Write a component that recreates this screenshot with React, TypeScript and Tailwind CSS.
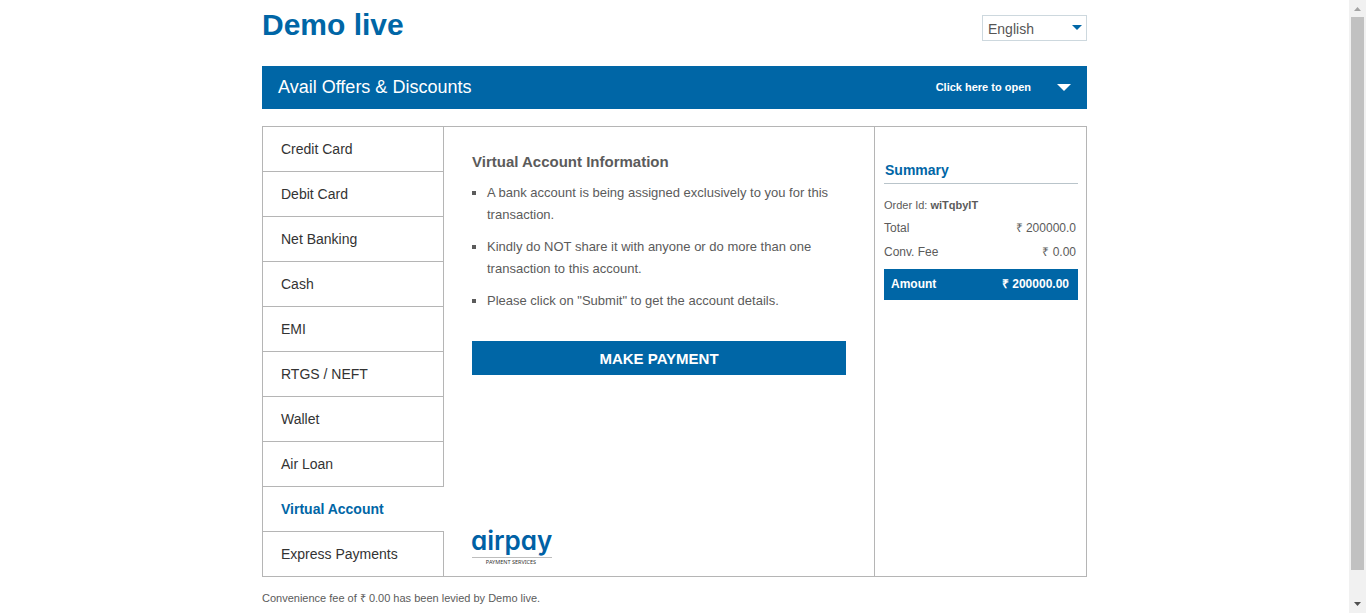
import { useState } from "react";

const methods = [
  "Credit Card",
  "Debit Card",
  "Net Banking",
  "Cash",
  "EMI",
  "RTGS / NEFT",
  "Wallet",
  "Air Loan",
  "Virtual Account",
  "Express Payments",
];

const notes = [
  "A bank account is being assigned exclusively to you for this transaction.",
  "Kindly do NOT share it with anyone or do more than one transaction to this account.",
  'Please click on "Submit" to get the account details.',
];

function Header() {
  return (
    <header className="flex items-start justify-between">
      <h1 className="pt-[5px] text-[30px] leading-10 font-bold text-[#0066a6]">Demo live</h1>
      <div className="relative mt-[15px] w-[105px]">
        <select
          aria-label="Language"
          className="block h-[26px] w-full appearance-none rounded-none border border-[#cdd8de] bg-white pt-[2px] pl-[5px] text-sm leading-5 text-[#555]"
        >
          <option>English</option>
          <option>Hindi</option>
        </select>
        <svg
          className="pointer-events-none absolute top-[10px] right-[5px]"
          width="10"
          height="5"
          viewBox="0 0 10 5"
          aria-hidden="true"
        >
          <path d="M0 0h10L5 5z" fill="#0066a6" />
        </svg>
      </div>
    </header>
  );
}

function OffersBar() {
  return (
    <button
      type="button"
      className="mt-[21px] flex h-[43px] w-full items-center bg-[#0066a6] px-4 text-left text-white"
    >
      <span className="flex-1 pb-[2px] text-lg">Avail Offers &amp; Discounts</span>
      <span className="text-[11px] font-bold">Click here to open</span>
      <svg className="ml-[26px]" width="14" height="7" viewBox="0 0 14 7" aria-hidden="true">
        <path d="M0 0h14L7 7z" fill="#fff" />
      </svg>
    </button>
  );
}

function MethodMenu({ active, onSelect }: { active: string; onSelect: (m: string) => void }) {
  return (
    <nav aria-label="Payment methods" className="flex w-[181px] shrink-0 flex-col">
      {methods.map((m) => (
        <button
          key={m}
          type="button"
          onClick={() => onSelect(m)}
          aria-current={m === active}
          className={
            "h-[45px] border-b border-[#b5b5b5] pl-[18px] text-left text-sm last:h-11 last:border-b-0 " +
            (m === active ? "font-bold text-[#0066a6]" : "border-r text-[#333]")
          }
        >
          {m}
        </button>
      ))}
    </nav>
  );
}

function AirpayLogo() {
  return (
    <svg
      className="-ml-1"
      width="90"
      height="44"
      viewBox="-4 -8 90 44"
      role="img"
      aria-label="airpay payment services"
    >
      <text
        x="-1"
        y="21"
        fontSize="26"
        fontWeight="600"
        fill="#0061a5"
        className="font-['Inter',sans-serif] [font-feature-settings:'cv11']"
      >
        airpay
      </text>
      <path d="M0 28.5h80" stroke="#bdbdbd" />
      <text
        x="39"
        y="35"
        fontSize="5.5"
        textAnchor="middle"
        fill="#333"
        className="font-['Noto_Sans',sans-serif]"
      >
        PAYMENT SERVICES
      </text>
    </svg>
  );
}

function Details() {
  return (
    <section className="flex min-w-0 flex-1 flex-col px-7 pt-[25px] pb-[11px] text-[#5b5b5b]">
      <h2 className="text-[15px] leading-5 font-bold">Virtual Account Information</h2>
      <ul className="mt-[10px] flex flex-col gap-[10px] text-[13px] leading-[22px]">
        {notes.map((n) => (
          <li key={n} className="flex gap-[11px]">
            <span className="mt-[9px] size-1 shrink-0 bg-[#5b5b5b]" />
            <span>{n}</span>
          </li>
        ))}
      </ul>
      <button
        type="button"
        className="mt-[29px] h-[34px] w-full bg-[#0066a6] pt-[2px] text-[15px] font-bold text-white"
      >
        MAKE PAYMENT
      </button>
      <div className="mt-auto">
        <AirpayLogo />
      </div>
    </section>
  );
}

function Summary() {
  return (
    <aside className="w-[212px] shrink-0 border-l border-[#b5b5b5] pt-[33px] pr-2 pl-[9px] text-[#5b5b5b]">
      <h2 className="border-b border-[#b9c4ca] pb-[3px] pl-px text-sm leading-5 font-bold text-[#0066a6]">
        Summary
      </h2>
      <p className="mt-[11px] text-[11px] leading-5">
        Order Id: <b>wiTqbyIT</b>
      </p>
      <dl className="pt-px text-xs leading-6">
        <div className="flex justify-between pr-[2px]">
          <dt>Total</dt>
          <dd>₹ 200000.0</dd>
        </div>
        <div className="flex justify-between pr-[2px]">
          <dt>Conv. Fee</dt>
          <dd>₹ 0.00</dd>
        </div>
        <div className="mt-[5px] flex h-[31px] items-center justify-between bg-[#0066a6] pr-[9px] pb-[2px] pl-[7px] font-bold text-white">
          <dt>Amount</dt>
          <dd>₹ 200000.00</dd>
        </div>
      </dl>
    </aside>
  );
}

function ScrollRail() {
  return (
    <div
      aria-hidden="true"
      className="sticky top-0 flex h-screen w-[17px] shrink-0 flex-col items-center bg-[#f1f1f1]"
    >
      <svg width="17" height="17" viewBox="0 0 17 17">
        <path d="M5 11h7L8.500 7z" fill="#a3a3a3" />
      </svg>
      <div className="mb-[26px] w-[13px] flex-1 bg-[#c1c1c1]" />
      <svg width="17" height="17" viewBox="0 0 17 17">
        <path d="M5 6h7L8.500 10z" fill="#505050" />
      </svg>
    </div>
  );
}

export default function App() {
  const [active, setActive] = useState("Virtual Account");
  return (
    <div className="flex min-h-screen bg-white font-['Liberation_Sans',Arial,sans-serif]">
      <div className="min-w-0 flex-1">
        <main className="mx-auto max-w-[825px]">
          <Header />
          <OffersBar />
          <div className="mt-[17px] flex border border-[#b5b5b5]">
            <MethodMenu active={active} onSelect={setActive} />
            <Details />
            <Summary />
          </div>
          <p className="mt-[11px] text-[11px] leading-5 text-[#5b5b5b]">
            Convenience fee of ₹ 0.00 has been levied by Demo live.
          </p>
        </main>
      </div>
      <ScrollRail />
    </div>
  );
}
